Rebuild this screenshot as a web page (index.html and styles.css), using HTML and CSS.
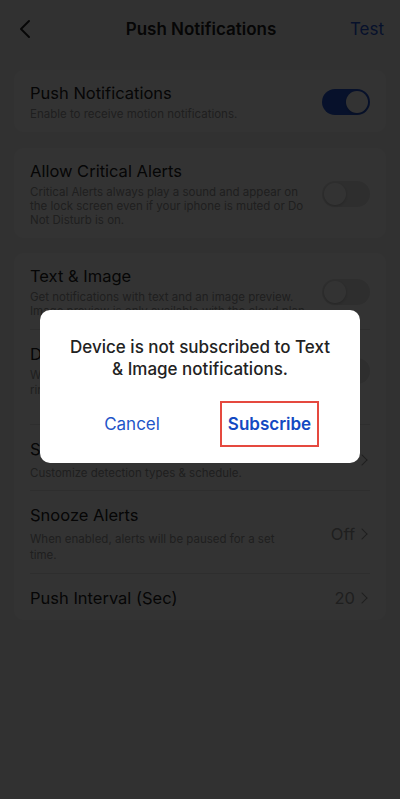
FILE: index.html
```html
<!DOCTYPE html>
<html lang="en">
<head>
  <meta charset="UTF-8">
  <meta name="viewport" content="width=device-width, initial-scale=1.0">
  <title>Push Notifications</title>
  <link rel="stylesheet" href="styles.css">
</head>
<body>

  <div class="nav">
    <svg class="back" width="36" height="20" viewBox="0 0 36 20">
      <path d="M11 2 L3 10 L11 18" fill="none" stroke="#222" stroke-width="2" stroke-linecap="round" stroke-linejoin="round"/>
    </svg>
    <h1>Push Notifications</h1>
    <span class="nav-action">Test</span>
  </div>

  <div class="page">
    <div class="card">
      <div class="row">
        <div class="row-text">
          <div class="row-title">Push Notifications</div>
          <div class="row-sub">Enable to receive motion notifications.</div>
        </div>
        <div class="toggle on"><span class="knob"></span></div>
      </div>
    </div>

    <div class="card">
      <div class="row">
        <div class="row-text">
          <div class="row-title">Allow Critical Alerts</div>
          <div class="row-sub">Critical Alerts always play a sound and appear on the lock screen even if your iphone is muted or Do Not Disturb is on.</div>
        </div>
        <div class="toggle"><span class="knob"></span></div>
      </div>
    </div>

    <div class="card">
      <div class="row">
        <div class="row-text">
          <div class="row-title">Text &amp; Image</div>
          <div class="row-sub">Get notifications with text and an image preview. Image preview is only available with the cloud plan.</div>
        </div>
        <div class="toggle"><span class="knob"></span></div>
      </div>
      <div class="row mid">
        <div class="row-text">
          <div class="row-title">Doorbell Ring Alerts</div>
          <div class="row-sub">When enabled, you will receive an alert with a ringtone when the doorbell rings.</div>
        </div>
        <div class="toggle"><span class="knob"></span></div>
      </div>
      <div class="row loose tight">
        <div class="row-text narrow">
          <div class="row-title">Smart Detection</div>
          <div class="row-sub">Customize detection types &amp; schedule.</div>
        </div>
        <div class="value"><span class="chev"></span></div>
      </div>
      <div class="row loose">
        <div class="row-text narrow">
          <div class="row-title">Snooze Alerts</div>
          <div class="row-sub">When enabled, alerts will be paused for a set time.</div>
        </div>
        <div class="value">Off<span class="chev"></span></div>
      </div>
      <div class="row loose">
        <div class="row-text narrow">
          <div class="row-title">Push Interval (Sec)</div>
        </div>
        <div class="value">20<span class="chev"></span></div>
      </div>
    </div>
  </div>

  <!-- dimmed backdrop + alert -->
  <div class="backdrop">
    <div class="alert">
      <p class="alert-msg">Device is not subscribed to Text &amp; Image notifications.</p>
      <div class="alert-actions">
        <button class="btn">Cancel</button>
        <button class="btn primary">Subscribe</button>
      </div>
    </div>
  </div>

</body>
</html>
```

FILE: styles.css
```css
body {
  margin: 0;
  font-family: Inter, "Open Sans", sans-serif;
  background-color: #f6f6f6;
  color: #222;
  min-height: 799px;
}
.nav {
  display: flex;
  align-items: center;
  justify-content: space-between;
  height: 58px;
  padding: 0 16px 0 18px;
}
.nav h1 {
  margin: 0;
  font-size: 17px;
  font-weight: 600;
}
.nav-action {
  font-size: 17px;
  color: #2456d6;
  width: 36px;
  text-align: right;
}
.page {
  padding: 12px 14px 40px;
}
.card {
  background-color: #fff;
  border-radius: 10px;
  padding: 0 16px;
}
.card + .card {
  margin-top: 16px;
}
.card + .card + .card {
  margin-top: 15px;
}
.row {
  display: flex;
  align-items: center;
  justify-content: space-between;
  padding: 12px 0 11px;
  border-top: 1px solid #e6e6e6;
}
.row:first-child {
  border-top: none;
}
.row-text {
  width: 285px;
}
.row-text.narrow {
  width: 265px;
}
.row-title {
  font-size: 16.5px;
  line-height: 22px;
}
.row-sub {
  font-size: 11.5px;
  line-height: 14px;
  color: #9a9a9a;
  margin-top: 3px;
}
.row.mid {
  padding: 13px 0 26px;
}
.row.mid .row-sub {
  line-height: 15px;
}
.row.loose {
  padding: 13px 0 10px;
}
.row.loose.tight {
  padding-bottom: 9px;
}
.row.loose:last-child {
  padding-bottom: 11px;
}
.row.loose .row-sub {
  line-height: 16px;
  margin-top: 5px;
}
.toggle {
  width: 48px;
  height: 26px;
  border-radius: 13px;
  background-color: #e4e4e4;
  position: relative;
}
.toggle .knob {
  position: absolute;
  top: 2px;
  left: 2px;
  width: 22px;
  height: 22px;
  border-radius: 50%;
  background-color: #fff;
  box-shadow: 0 1px 3px rgba(0, 0, 0, 0.2);
}
.toggle.on {
  background-color: #2456d6;
}
.toggle.on .knob {
  left: 24px;
}
.value {
  display: flex;
  align-items: center;
  font-size: 16.5px;
  color: #999;
  padding-right: 4px;
}
.chev {
  width: 7px;
  height: 7px;
  border-right: 1.5px solid #999;
  border-top: 1.5px solid #999;
  transform: rotate(45deg);
  margin-left: 3px;
}

/* overlay */
.backdrop {
  position: fixed;
  top: 0;
  left: 0;
  right: 0;
  bottom: 0;
  background-color: rgba(0, 0, 0, 0.8);
  display: flex;
  justify-content: center;
  align-items: flex-start;
}
.alert {
  margin-top: 310px;
  width: 320px;
  height: 153px;
  box-sizing: border-box;
  background-color: #fff;
  border-radius: 10px;
  padding: 26px 24px 0;
}
.alert-msg {
  margin: 0;
  text-align: center;
  font-size: 17px;
  line-height: 22px;
  font-weight: 500;
  color: #222;
}
.alert-actions {
  display: grid;
  grid-template-columns: 1fr 1fr;
  margin-top: 21px;
}
.btn {
  justify-self: center;
  border: 2px solid transparent;
  background: none;
  font-family: inherit;
  font-size: 17px;
  color: #1f55c8;
  padding: 11px 6px;
}
.btn.primary {
  font-weight: 600;
  border-color: #e5493f;
  color: #1349c2;
  margin-left: 3px;
}
```
